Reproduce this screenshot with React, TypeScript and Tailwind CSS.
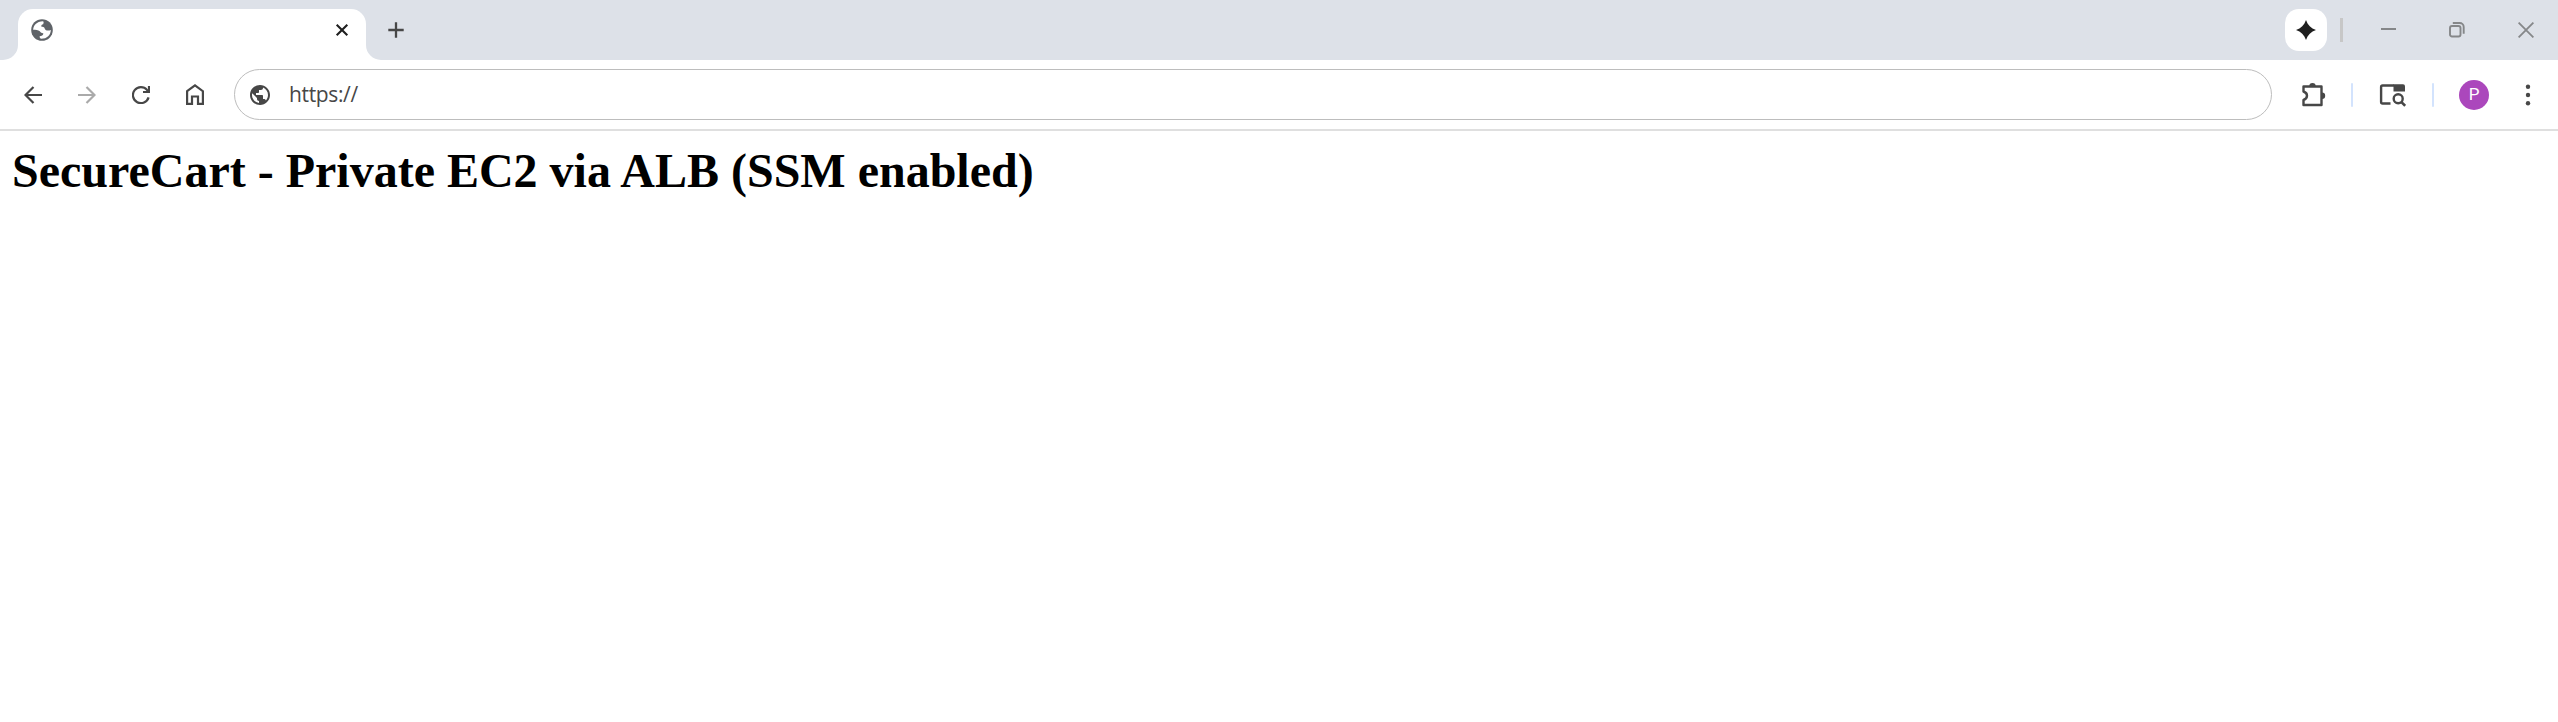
import React from "react";

const ink = "#474747";

function Divider() {
  return <span className="h-[24px] w-[2px] rounded-full bg-[#d3e3fd]" />;
}

function TabGlobe() {
  return (
    <svg width="22" height="22" viewBox="0 0 22 22" className="ml-[13px] shrink-0">
      <circle cx="11" cy="11" r="10.8" fill="#5f6368" />
      <path
        d="M2.2 10.8C2.2 6.6 5.6 2.6 12 2.3C13 2.9 12.6 4 12.2 5.2C10.6 5.4 10.3 6.2 10.2 7.6C11.5 7.8 13.4 8 13.8 9.7C14.2 11.4 16.6 11.8 18.6 11.4C19.3 11.1 19.8 11 19.8 11C19.8 16 16 19.8 10.2 19.8C9.6 19.6 8.6 19 8.6 17.2C10.6 17.1 12.2 16.4 12.4 14.4C10.8 14 9.4 13.4 8.8 12.2C7.4 10.9 4.4 11.2 2.2 10.8Z"
        fill="#fff"
      />
    </svg>
  );
}

function TabStrip() {
  return (
    <div className="flex h-[60px] bg-[#dde1e8]">
      <div className="flex items-end">
        <svg width="15" height="15" viewBox="0 0 15 15" className="ml-[3px]">
          <path d="M15 0V15H0A15 15 0 0 0 15 0Z" fill="#fff" />
        </svg>
        <div className="flex h-[51px] w-[348px] items-start rounded-t-[15px] bg-white pt-[10px]">
          <TabGlobe />
          <svg width="14" height="14" viewBox="0 0 14 14" className="mt-[4px] ml-[282px]">
            <path d="M1.7 1.7L12.3 12.3M12.3 1.7L1.7 12.3" stroke="#1f1f1f" strokeWidth="2.1" />
          </svg>
        </div>
        <svg width="15" height="15" viewBox="0 0 15 15">
          <path d="M0 0V15H15A15 15 0 0 1 0 0Z" fill="#fff" />
        </svg>
      </div>
      <svg width="16" height="16" viewBox="0 0 16 16" className="mt-[22px] ml-[7px]">
        <path d="M8 0.3V15.7M0.3 8H15.7" stroke={ink} strokeWidth="2.3" />
      </svg>
      <div className="ml-auto flex h-[60px] items-center">
        <div className="flex size-[42px] items-center justify-center rounded-[14px] bg-white">
          <svg width="20" height="20" viewBox="0 0 20 20">
            <path d="M10 0C11.7 5 15 8.3 20 10C15 11.7 11.7 15 10 20C8.3 15 5 11.7 0 10C5 8.3 8.3 5 10 0Z" fill="#1f1f1f" />
          </svg>
        </div>
        <span className="ml-[13px] h-[24px] w-[3px] bg-[#c7c7c7]" />
        <span className="ml-[38px] h-[2px] w-[15px] -translate-y-[1px] bg-[#858789]" />
        <svg width="16" height="16" viewBox="0 0 16 16" fill="none" stroke="#858789" className="ml-[53px]">
          <rect x="1" y="4" width="10.5" height="10.5" rx="2" strokeWidth="1.9" />
          <path d="M3.8 1H10.7A4 4 0 0 1 14.7 5V11.8" strokeWidth="1.9" />
        </svg>
        <svg width="16" height="16" viewBox="0 0 16 16" fill="none" stroke="#858789" className="mr-[24px] ml-[53px]">
          <path d="M0.6 0.6L15.4 15.4M15.4 0.6L0.6 15.4" strokeWidth="1.8" />
        </svg>
      </div>
    </div>
  );
}

function Toolbar() {
  return (
    <div className="flex h-[71px] items-center border-b-2 border-[#dfdfdf] bg-white">
      <svg width="18" height="18" viewBox="0 0 18 18" fill="none" stroke={ink} strokeWidth="2.2" className="ml-[24px]">
        <path d="M18 9H1.5M9.5 1L1.5 9L9.5 17" />
      </svg>
      <svg width="18" height="18" viewBox="0 0 18 18" fill="none" stroke="#aaaaaa" strokeWidth="2.2" className="ml-[36px]">
        <path d="M0 9H16.5M8.5 1L16.5 9L8.5 17" />
      </svg>
      <svg width="18" height="18" viewBox="0 0 18 18" fill="none" stroke={ink} strokeWidth="2.2" className="ml-[36px]">
        <path d="M16.6 11.4A8 8 0 1 1 15 3.9L16.8 5.8M17 0V6H11" />
      </svg>
      <svg width="18" height="21" viewBox="0 0 18 21" fill="none" stroke={ink} strokeWidth="2.2" className="ml-[36px]">
        <path d="M1.1 7.2L9 1.4L16.9 7.2V19.9H12V12.5H6V19.9H1.1Z" />
      </svg>
      <div className="ml-[30px] flex h-[51px] w-[2038px] items-center rounded-full border border-[#bdbdbd]">
        <svg width="24" height="24" viewBox="0 0 24 24" className="ml-[13px]">
          <path
            fill={ink}
            d="M12 2C6.48 2 2 6.48 2 12s4.48 10 10 10 10-4.48 10-10S17.52 2 12 2zm-1 17.93c-3.95-.49-7-3.85-7-7.93 0-.62.08-1.21.21-1.79L9 15v1c0 1.1.9 2 2 2v1.93zm6.9-2.54c-.26-.81-1-1.39-1.9-1.39h-1v-3c0-.55-.45-1-1-1H8v-2h2c.55 0 1-.45 1-1V7h2c1.1 0 2-.9 2-2v-.41c2.93 1.19 5 4.06 5 7.41 0 2.08-.8 3.97-2.1 5.39z"
          />
        </svg>
        <span className="ml-[17px] font-['Open_Sans',sans-serif] text-[21px] leading-none tracking-[-0.35px] text-[#474747]">https://</span>
      </div>
      <svg width="25" height="25" viewBox="0 0 25 25" className="-mt-px ml-[29px]">
        <path
          d="M2.5 4.5H20.5V23H2.5V18C4.5 17.3 6 16 6 13.8S4.5 10.2 2.5 9.5Z"
          fill="none"
          stroke={ink}
          strokeWidth="2.4"
          strokeLinejoin="round"
        />
        <path d="M8.3 4.2A3.2 3.2 0 0 1 14.7 4.2ZM21 10.6A3.2 3.2 0 0 1 21 17Z" fill={ink} />
      </svg>
      <span className="ml-[25px] flex">
        <Divider />
      </span>
      <svg width="27" height="24" viewBox="0 0 27 24" className="ml-[26px]">
        <path d="M11.5 20.5H3.6A1.5 1.5 0 0 1 2.1 19V4A1.5 1.5 0 0 1 3.6 2.5H15" fill="none" stroke={ink} strokeWidth="2.4" />
        <path d="M14.5 1.3H24A2 2 0 0 1 26 3.3V8.4H14.5Z" fill={ink} />
        <circle cx="19.2" cy="15.8" r="4.5" fill="none" stroke={ink} strokeWidth="2.4" />
        <path d="M22.2 18.8L26.2 22.8" stroke={ink} strokeWidth="2.6" />
      </svg>
      <span className="ml-[26px] flex">
        <Divider />
      </span>
      <span className="ml-[25px] flex size-[30px] items-center justify-center rounded-full bg-[#ab47bc] font-['Roboto',sans-serif] text-[17px] leading-none text-white">
        P
      </span>
      <svg width="6" height="22" viewBox="0 0 6 22" fill={ink} className="ml-[36px]">
        <circle cx="3" cy="2.7" r="2.2" />
        <circle cx="3" cy="11" r="2.2" />
        <circle cx="3" cy="19.3" r="2.2" />
      </svg>
    </div>
  );
}

export default function App() {
  return (
    <div className="flex h-[722px] w-full flex-col overflow-hidden bg-white">
      <TabStrip />
      <Toolbar />
      <main className="px-[12px] pt-[12px]">
        <h1 className="font-['Liberation_Serif',serif] text-[48px] leading-[55px] font-bold text-black">
          SecureCart - Private EC2 via ALB (SSM enabled)
        </h1>
      </main>
    </div>
  );
}
